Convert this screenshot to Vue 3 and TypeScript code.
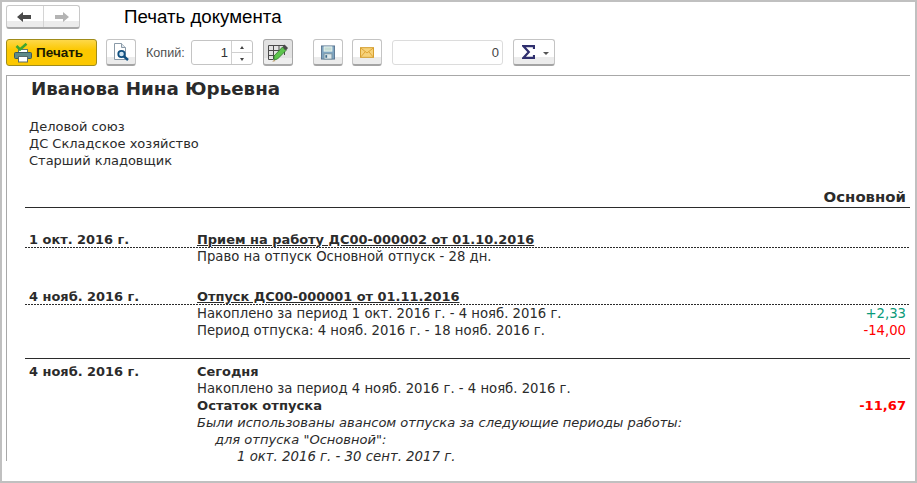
<script setup lang="ts">
interface Line { text: string; cls?: string; value?: string; valueCls?: string }
interface Entry { date: string; title: string; link: boolean; rule: boolean; lines: Line[] }

const org: string[] = ['Деловой союз', 'ДС Складское хозяйство', 'Старший кладовщик']

const entries: Entry[] = [
  { date: '1 окт. 2016 г.', title: 'Прием на работу ДС00-000002 от 01.10.2016', link: true, rule: false,
    lines: [{ text: 'Право на отпуск Основной отпуск - 28 дн.' }] },
  { date: '4 нояб. 2016 г.', title: 'Отпуск ДС00-000001 от 01.11.2016', link: true, rule: false,
    lines: [
      { text: 'Накоплено за период 1 окт. 2016 г. - 4 нояб. 2016 г.', value: '+2,33', valueCls: 'green' },
      { text: 'Период отпуска: 4 нояб. 2016 г. - 18 нояб. 2016 г.', value: '-14,00', valueCls: 'red' }
    ] },
  { date: '4 нояб. 2016 г.', title: 'Сегодня', link: false, rule: true,
    lines: [
      { text: 'Накоплено за период 4 нояб. 2016 г. - 4 нояб. 2016 г.' },
      { text: 'Остаток отпуска', cls: 'bold', value: '-11,67', valueCls: 'red bold' },
      { text: 'Были использованы авансом отпуска за следующие периоды работы:', cls: 'ital' },
      { text: 'для отпуска "Основной":', cls: 'ital ind1' },
      { text: '1 окт. 2016 г. - 30 сент. 2017 г.', cls: 'ital ind2' }
    ] }
]
</script>

<template>
  <div class="frame">
    <header class="top">
      <div class="nav">
        <button class="nav-btn">
          <svg width="17" height="12" viewBox="0 0 17 12"><path d="M1 6 L7 1 V4 H15 V8 H7 V11 Z" fill="#4a4a4a" /></svg>
        </button>
        <button class="nav-btn">
          <svg width="17" height="12" viewBox="0 0 17 12"><path d="M16 6 L10 1 V4 H2 V8 H10 V11 Z" fill="#b4b4b4" /></svg>
        </button>
      </div>
      <h1 class="title">Печать документа</h1>
    </header>

    <div class="toolbar">
      <button class="btn primary">
        <svg width="20" height="20" viewBox="0 0 20 20">
          <rect x="5.5" y="6.5" width="9" height="5" fill="#fff" stroke="#5f7570" />
          <rect x="1.5" y="9.5" width="17" height="6" rx="1" fill="#5f8a88" stroke="#3c5a5c" />
          <rect x="5.5" y="13.5" width="9" height="5.5" fill="#fff" stroke="#5a6a6a" />
          <path d="M3.5 3 L7 6.5 L13.5 .8" fill="none" stroke="#3ea62e" stroke-width="2.6" />
        </svg>
        <span>Печать</span>
      </button>
      <button class="btn icon preview">
        <svg width="18" height="20" viewBox="0 0 18 20">
          <path d="M2.5 1.5 H9.5 L13.5 5.5 V17.5 H2.5 Z" fill="#fff" stroke="#8a9aa8" />
          <path d="M9.5 1.5 V5.5 H13.5" fill="#dde4ea" stroke="#8a9aa8" />
          <circle cx="9.5" cy="12" r="3.2" fill="#cfe4f2" stroke="#0f4f80" stroke-width="1.8" />
          <path d="M12 14.5 L16 18" stroke="#0f4f80" stroke-width="2.4" />
        </svg>
      </button>
      <label class="copies">Копий:</label>
      <div class="spinner">
        <span class="spin-val">1</span>
        <span class="spin-arrows">
          <span class="arrow up"></span>
          <span class="arrow down"></span>
        </span>
      </div>
      <button class="btn icon pressed">
        <svg width="22" height="20" viewBox="0 0 22 20">
          <path d="M1.5 3.5 H17.5 V13 M1.5 8.5 H17.5 M1.5 13.5 H10 M1.5 17.5 H6 M1.5 3.5 V17.5 M6.5 3.5 V17.5 M12 3.5 V12" fill="none" stroke="#4a4a4a" />
          <path d="M7 14 L15.5 5 L19 8.5 L10.5 17 L7 18 Z" fill="#5cc44c" stroke="#2f7a2a" stroke-width=".8" />
          <path d="M15.5 5 L17.5 2.5 L21 6 L19 8.5 Z" fill="#4a4a4a" />
          <path d="M7 18 L5.2 19.8 L8.6 19 Z" fill="#b08a50" />
        </svg>
      </button>
      <button class="btn icon save">
        <svg width="14" height="15" viewBox="0 0 16 16">
          <rect x=".5" y=".5" width="15" height="15" fill="#7fa6c2" stroke="#56708c" />
          <rect x="3" y="1" width="10" height="6" fill="#e8f2ee" />
          <path d="M4 3 H12 M4 5 H12" stroke="#a6c8c0" />
          <rect x="3.5" y="9.5" width="9" height="6" fill="#dfe8ea" stroke="#7a93a0" />
          <rect x="5" y="11" width="2" height="3" fill="#3c6a8c" />
        </svg>
      </button>
      <button class="btn icon mail">
        <svg width="14" height="11" viewBox="0 0 16 12">
          <rect x=".5" y=".5" width="15" height="11" fill="#f6d27a" stroke="#d0951c" />
          <path d="M1 1 L8 6.5 L15 1 M1 11 L6 5 M15 11 L10 5" fill="none" stroke="#dc9f2e" />
        </svg>
      </button>
      <div class="sum-field">0</div>
      <button class="btn sigma">
        <svg width="13" height="14" viewBox="0 0 13 14"><path d="M12 4 V1.2 H1.5 L6.8 7 L1.5 12.8 H12 V10" fill="none" stroke="#2f2f6e" stroke-width="2.2" /></svg>
        <span class="caret"></span>
      </button>
    </div>

    <main class="doc">
      <h2 class="name">Иванова Нина Юрьевна</h2>
      <div class="org">
        <div v-for="o in org" :key="o">{{ o }}</div>
      </div>
      <div class="head">Основной</div>

      <section v-for="(e, i) in entries" :key="i" class="entry" :class="{ ruled: e.rule }">
        <div class="entry-head" :class="{ dotted: e.link }">
          <div class="date">{{ e.date }}</div>
          <div class="etitle" :class="{ link: e.link }">{{ e.title }}</div>
        </div>
        <div v-for="(l, j) in e.lines" :key="j" class="line">
          <div class="txt" :class="l.cls">{{ l.text }}</div>
          <div v-if="l.value" class="val" :class="l.valueCls">{{ l.value }}</div>
        </div>
      </section>
    </main>
  </div>
</template>

<style scoped>
.frame {
  box-sizing: border-box;
  width: 917px;
  height: 483px;
  border: 2px solid #c0c0c0;
  background: #fff;
  overflow: hidden;
  font-family: "Liberation Sans", Arial, sans-serif;
  padding: 3px 0 0 4px;
}
.top {
  display: flex;
  align-items: center;
  height: 24px;
}
.nav {
  display: flex;
  width: 74px;
  height: 24px;
  box-sizing: border-box;
  border: 1px solid #c8c8c8;
  border-bottom: 2px solid #a8a8a8;
  border-radius: 3px;
  background: linear-gradient(#fff 0 72%, #ececec 72%);
}
.nav-btn {
  flex: 1;
  border: 0;
  padding: 0;
  background: none;
  display: flex;
  align-items: center;
  justify-content: center;
}
.nav-btn + .nav-btn { border-left: 1px solid #d4d4d4; }
.title {
  margin: 0 0 0 44px;
  font-size: 18.7px;
  font-weight: 400;
  color: #000;
  line-height: 24px;
}
.toolbar {
  display: flex;
  align-items: center;
  height: 27px;
  margin-top: 10px;
}
.btn {
  box-sizing: border-box;
  height: 27px;
  padding: 0;
  border: 1px solid #c4c4c4;
  border-bottom: 2px solid #a4a4a4;
  border-radius: 3px;
  background: linear-gradient(#fff 0 72%, #ececec 72%);
  display: flex;
  align-items: center;
  justify-content: center;
  flex: none;
}
.primary {
  width: 91px;
  border: 1px solid #a08c1a;
  background: linear-gradient(#fdd84a, #fcc800 40%);
  justify-content: flex-start;
  padding-left: 6px;
  gap: 3px;
  font: 700 13.5px "Liberation Sans", Arial, sans-serif;
  color: #1a1a00;
}
.icon { width: 30px; }
.preview { margin-left: 9px; }
.copies {
  margin-left: 10px;
  width: 45px;
  font-size: 12.6px;
  color: #4f4f4f;
}
.spinner {
  box-sizing: border-box;
  width: 62px;
  height: 25px;
  border: 1px solid #c4c4c4;
  border-radius: 3px;
  display: flex;
  align-items: center;
  font-size: 13px;
  color: #333;
}
.spin-val {
  flex: 1;
  text-align: right;
  padding-right: 3px;
}
.spin-arrows {
  width: 20px;
  height: 100%;
  border-left: 1px solid #d0d0d0;
  display: flex;
  flex-direction: column;
}
.arrow {
  flex: 1;
  position: relative;
}
.arrow::after {
  content: "";
  position: absolute;
  left: 8px;
  top: 5px;
  border-left: 2px solid transparent;
  border-right: 2px solid transparent;
}
.arrow.up::after { border-bottom: 3px solid #444; }
.arrow.down { border-top: 1px solid #d0d0d0; }
.arrow.down::after { border-top: 3px solid #444; }
.pressed {
  margin-left: 10px;
  background: linear-gradient(#e2e2e2 0 75%, #eee 75%);
  border-color: #a8a8a8;
}
.save { margin-left: 20px; }
.mail { margin-left: 9px; }
.sum-field {
  box-sizing: border-box;
  margin-left: 10px;
  width: 111px;
  height: 25px;
  border: 1px solid #dcdcdc;
  border-radius: 3px;
  text-align: right;
  padding-right: 3px;
  font-size: 13px;
  line-height: 23px;
  color: #444;
}
.sigma {
  margin-left: 10px;
  width: 42px;
  gap: 8px;
  justify-content: flex-start;
  padding-left: 8px;
}
.caret {
  border-left: 3px solid transparent;
  border-right: 3px solid transparent;
  border-top: 3px solid #555;
  margin-top: 2px;
}
.doc {
  box-sizing: border-box;
  margin-top: 9px;
  width: 904px;
  height: 386px;
  border-top: 1px solid #a8a8a8;
  border-left: 1px solid #a8a8a8;
  padding: 0 0 0 18px;
  font-family: "DejaVu Sans", Verdana, sans-serif;
  font-size: 13.22px;
  line-height: 17px;
  color: #2b2b2b;
}
.name {
  margin: 3px 0 0 6px;
  font-size: 18.3px;
  line-height: 20px;
  font-weight: 700;
  color: #2b2b2b;
}
.org {
  margin: 19px 0 0 4px;
  font-size: 13px;
}
.head {
  margin-top: 20px;
  height: 17px;
  box-sizing: content-box;
  padding-right: 4px;
  padding-bottom: 1px;
  text-align: right;
  font-weight: 700;
  font-size: 14.9px;
  border-bottom: 1px solid #2b2b2b;
  width: 881px;
}
.entry {
  width: 885px;
  margin-top: 23px;
}
.entry + .entry { margin-top: 23px; }
.entry.ruled {
  margin-top: 19px;
  border-top: 1px solid #2b2b2b;
  padding-top: 4px;
}
.entry-head {
  display: flex;
  height: 17px;
  padding-left: 4px;
  font-weight: 700;
  font-size: 12.95px;
}
.entry-head.dotted {
  height: 17px;
  background: repeating-linear-gradient(90deg, #2b2b2b 0 2px, transparent 2px 3px) left bottom / 100% 1px no-repeat;
}
.date {
  width: 168px;
  flex: none;
}
.etitle.link { text-decoration: underline; }
.line {
  display: flex;
  justify-content: space-between;
  padding: 0 4px 0 172px;
}
.txt { white-space: nowrap; }
.bold { font-weight: 700; font-size: 13.1px; }
.ital { font-style: italic; font-size: 13.05px; }
.ind1 { padding-left: 18px; }
.ind2 { padding-left: 40px; font-size: 13.3px; }
.green { color: #0a9a78; }
.red { color: #ff0000; }
</style>
